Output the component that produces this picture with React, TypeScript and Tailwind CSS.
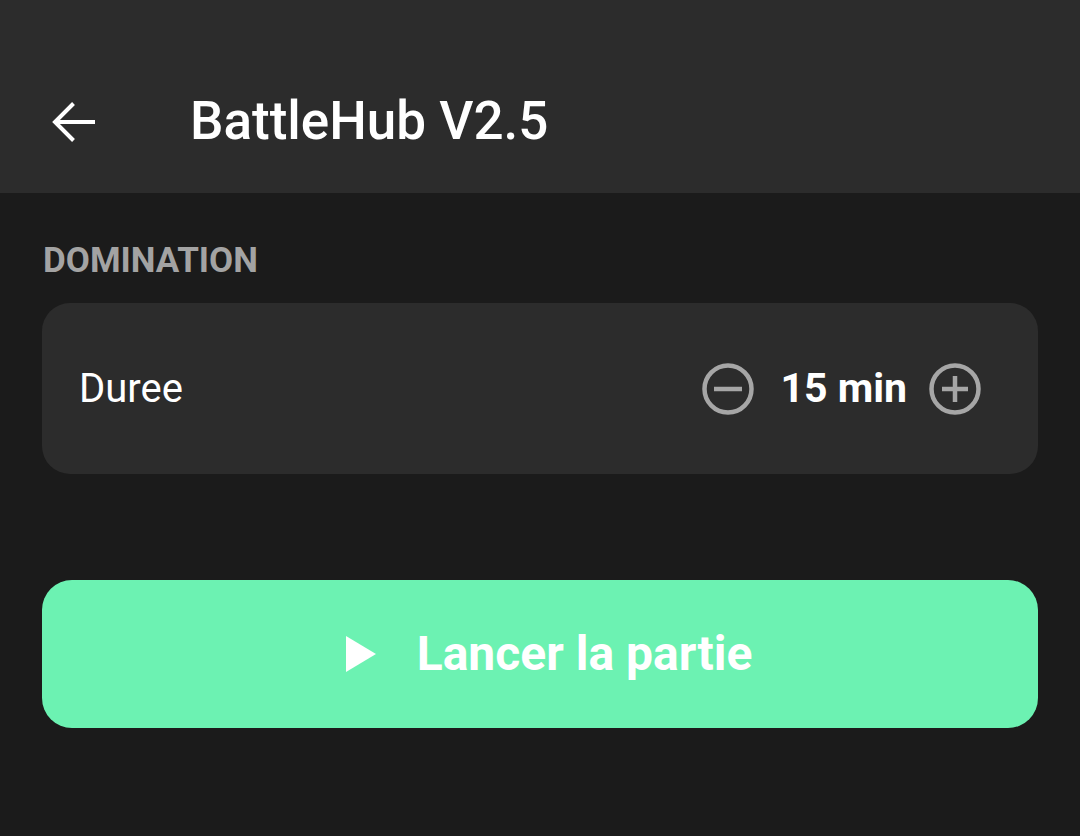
function BackArrow() {
  return (
    <svg width="46" height="46" viewBox="0 0 46 46" fill="none">
      <path d="M45 23 H5 M23.5 4.5 L5 23 L23.5 41.5" stroke="#ffffff" strokeWidth="4" strokeLinejoin="miter" />
    </svg>
  );
}

function MinusCircle() {
  return (
    <svg width="54" height="54" viewBox="0 0 54 54" fill="none">
      <circle cx="27" cy="27" r="23.5" stroke="#a6a6a6" strokeWidth="4.5" />
      <line x1="13" y1="27" x2="41" y2="27" stroke="#a6a6a6" strokeWidth="4.5" />
    </svg>
  );
}

function PlusCircle() {
  return (
    <svg width="54" height="54" viewBox="0 0 54 54" fill="none">
      <circle cx="27" cy="27" r="23.5" stroke="#a6a6a6" strokeWidth="4.5" />
      <line x1="14" y1="27" x2="40" y2="27" stroke="#a6a6a6" strokeWidth="4.5" />
      <line x1="27" y1="14" x2="27" y2="40" stroke="#a6a6a6" strokeWidth="4.5" />
    </svg>
  );
}

export default function App() {
  return (
    <div className="w-[1080px] h-[836px] bg-[#1b1b1b] flex flex-col" style={{ fontFamily: 'Roboto, "Noto Sans", sans-serif' }}>
      {/* Top bar */}
      <div className="h-[193px] bg-[#2c2c2c] flex items-center pt-[50px] pl-[50px] shrink-0">
        <BackArrow />
        <h1 className="ml-[94px] text-white text-[53px] font-medium leading-none">BattleHub V2.5</h1>
      </div>

      <div className="px-[42px] pt-[50px] flex flex-col">
        <div className="text-[#a3a3a3] text-[35px] font-bold leading-none pl-[1px]">DOMINATION</div>

        {/* Duration card */}
        <div className="mt-[25px] h-[171px] rounded-[28px] bg-[#2c2c2c] flex items-center pl-[37px] pr-[56px]">
          <span className="text-white text-[40px] leading-none">Duree</span>
          <div className="ml-auto flex items-center">
            <MinusCircle />
            <span className="ml-[25px] mr-[21px] text-white text-[41px] font-bold leading-none">15 min</span>
            <PlusCircle />
          </div>
        </div>

        {/* Start button */}
        <button className="mt-[106px] h-[148px] rounded-[30px] bg-[#6cf2b2] flex items-center justify-center gap-[41px] pl-[18px]">
          <svg width="30" height="36" viewBox="0 0 30 36">
            <polygon points="0,0 30,18 0,36" fill="#ffffff" />
          </svg>
          <span className="text-white text-[48px] font-bold leading-none">Lancer la partie</span>
        </button>
      </div>
    </div>
  );
}
